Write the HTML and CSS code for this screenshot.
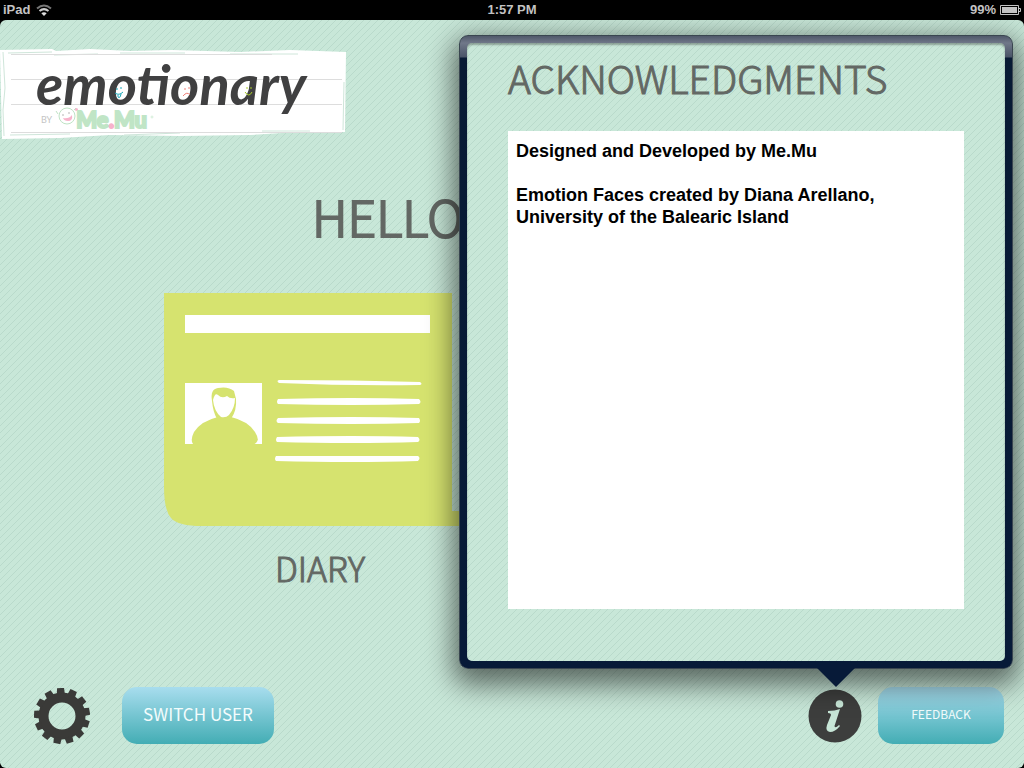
FILE: index.html
```html
<!DOCTYPE html>
<html lang="en">
<head>
<meta charset="utf-8">
<title>Emotionary</title>
<link rel="stylesheet" href="styles.css">
</head>
<body>
<header class="status">
  <div class="status-left"><span>iPad</span>
    <svg class="wifi" viewBox="0 0 16 12" aria-hidden="true"><path d="M1 4.500Q8-1.500 15 4.500" stroke="#777"/><path d="M3.500 7Q8 3.200 12.500 7" stroke="#ccc"/><path d="M8 12L5.300 9.200Q8 7.200 10.700 9.200Z" fill="#ddd"/></svg>
  </div>
  <time>1:57 PM</time>
  <div class="status-right"><span>99%</span>
    <svg class="battery" viewBox="0 0 21 10" aria-hidden="true"><path d="M.5.5H18.500V9.500H.5Z" fill="none" stroke="#c4c4c4"/><path d="M2 2H17V8H2Z" fill="#c4c4c4"/><path d="M19 3.500H20.500V6.500H19" fill="none" stroke="#c4c4c4"/></svg>
  </div>
</header>
<main class="screen">
  <div class="brand">
    <svg class="brand-art" viewBox="0 0 346 92" aria-hidden="true">
      <path class="paper" d="M0 2L52 1 56 3 90 1 130 3 172 2 240 4 290 2 346 4 345 84 282 85 250 87 180 88 110 87 60 90 2 91Z"/>
      <path class="scratch" d="M4 88L3 62 5 40 3 4M8 5L52 4M54 7L98 6M120 5L185 5M230 6L298 6M344 34L343 82M10 87L70 86M124 87L180 85M262 83L310 83"/>
      <path class="rule" d="M11 6.500H272M11 31.500H342M11 56.500H342M11 84.500H342"/>
      <g class="mascot"><circle cx="67" cy="68" r="8"/><path d="M56 63L58 66M74 62L76 60"/><path class="pink" d="M63 70Q69 71 72 67Q73 73 68 73Q64 73 63 70Z"/><circle class="pink" cx="76.500" cy="61.500" r="1.500"/><circle class="eye" cx="63" cy="67" r=".7"/><circle class="eye" cx="69" cy="65" r=".7"/></g>
      <circle cx="152" cy="69" r="1" fill="none" stroke="#c0e5c6" stroke-width=".6"/>
    </svg>
    <div class="brand-text"><span class="wordmark">emotionary</span><span class="byline"><span class="by">BY</span><span class="maker">Me<b>.</b>Mu</span></span></div>
    <svg class="brand-art" viewBox="0 0 346 92" aria-hidden="true">
      <g class="face blue"><path d="M115 45Q119 48 123 44M118 47V49Q120 51 121 46"/><path d="M117 40V42M121 39V41"/></g>
      <g class="face red"><path d="M183 48Q187 43 190 47"/><path d="M185 40V42M189 39V41"/></g>
      <g class="face lime"><path d="M245 44Q249 50 252 44"/><path d="M247 39V41M251 39V41"/></g>
    </svg>
  </div>
  <h1 class="hello">HELLO</h1>
  <a class="diary" href="#diary">
    <svg class="diary-art" viewBox="0 0 312 234" aria-hidden="true">
      <path fill="#d6e36f" d="M0 0H288V218H312V233H38Q14 233 7 225 0 217 0 194Z"/>
      <path fill="#fff" d="M21 22H266V40H21ZM21 90H98V151H21Z"/>
      <path fill="#d6e36f" d="M54 124Q37 128 30 139 26 147 29 151L34 152H89L92 150Q96 147 91 139 84 128 67 124Z"/>
      <path fill="#d6e36f" d="M48 108Q46 96 54 95 64 93 70 98L72 106Q73 117 67 126L62 131H58L53 126Q49 119 48 108Z"/>
      <path fill="#fff" d="M49 107Q51 99 54 102 58 106 63 103 66 106 71 105 71 115 65 122 62 125 57 124 50 118 49 107Z"/>
      <path fill="#fff" d="M115 87Q190 87 256 89Q259 91 256 92Q185 93 115 90Q112 88 115 87ZM114 106Q190 104 255 106Q258 109 255 111Q190 113 114 111Q112 109 114 106ZM114 125Q190 123 255 125Q257 128 255 130Q190 132 114 130Q111 128 114 125ZM113 144Q190 142 254 144Q257 147 254 149Q190 151 113 149Q111 147 113 144ZM112 163H254Q257 165 254 168Q190 170 112 168Q110 166 112 163Z"/>
    </svg>
    <span class="diary-label">DIARY</span>
  </a>
  <footer class="toolbar">
    <button class="icon-button" type="button" aria-label="Settings">
      <svg class="gear" viewBox="-28 -28 56 56" aria-hidden="true"><defs><path id="cog" d="M-4-22L-3.500-28H3.500L4-22Z"/></defs><circle r="18.500" fill="none" stroke="#3a3a38" stroke-width="10"/><g fill="#3a3a38"><use href="#cog" transform="rotate(-3)"/><use href="#cog" transform="rotate(24.700)"/><use href="#cog" transform="rotate(52.400)"/><use href="#cog" transform="rotate(80)"/><use href="#cog" transform="rotate(107.700)"/><use href="#cog" transform="rotate(135.400)"/><use href="#cog" transform="rotate(163)"/><use href="#cog" transform="rotate(190.700)"/><use href="#cog" transform="rotate(218.400)"/><use href="#cog" transform="rotate(246)"/><use href="#cog" transform="rotate(273.700)"/><use href="#cog" transform="rotate(301.400)"/><use href="#cog" transform="rotate(329)"/></g></svg>
    </button>
    <button class="pill switch" type="button">SWITCH USER</button>
    <button class="icon-button info-button" type="button" aria-label="Information">
      <svg class="info" viewBox="0 0 54 54" aria-hidden="true"><circle cx="27" cy="27" r="26.500" fill="#3d3e3d"/><circle cx="31.500" cy="15" r="3.800" fill="#c7e6d7"/><path fill="#c7e6d7" d="M20 22Q27 22 32 20L26.500 37Q27 40 31 36L32 37Q27 43 22 43 17 42 19 36L23 26Q23 24 20 24Z"/></svg>
    </button>
    <button class="pill feedback" type="button">FEEDBACK</button>
  </footer>
</main>
<section class="popover" role="dialog" aria-labelledby="ack-title">
  <div class="popover-body">
    <h2 class="ack-title" id="ack-title">ACKNOWLEDGMENTS</h2>
    <div class="ack-text"><p>Designed and Developed by Me.Mu</p><p>Emotion Faces created by Diana Arellano, University of the Balearic Island</p></div>
  </div>
  <svg class="pointer" viewBox="0 0 38 20" aria-hidden="true"><path d="M0 0H38L19 19Z" fill="#071a38"/></svg>
</section>
</body>
</html>
```
FILE: styles.css
```css
* { box-sizing: border-box; }

:root {
  --hand: "Noto Sans CJK JP", "Lato", sans-serif;
  --stripes: linear-gradient(135deg, #c8e7d8 45%, #b9dacb 50%, #c8e7d8 55%) 0 0 / 7px 7px;
}

body {
  display: flex;
  flex-direction: column;
  min-height: 100vh;
  margin: 0;
  position: relative;
  overflow: hidden;
  background: #000;
  font-family: var(--hand);
}

.status {
  display: grid;
  grid-template-columns: 1fr auto 1fr;
  align-items: center;
  height: 20px;
  padding: 0 3px;
  color: #c4c4c4;
  font: bold 13px/20px "Liberation Sans", Arial, sans-serif;
}
.status-left, .status-right { display: flex; align-items: center; gap: 6px; }
.status-right { justify-content: flex-end; gap: 4px; }
.wifi { width: 16px; height: 12px; fill: none; stroke-width: 2; }
.battery { width: 21px; height: 10px; }

.screen {
  display: flex;
  flex: 1;
  flex-direction: column;
  padding-top: 28px;
  border-radius: 6px;
  background: var(--stripes);
}

.brand { display: grid; width: 346px; }
.brand > * { grid-area: 1 / 1; }
.brand-art { width: 346px; height: 92px; }
.paper { fill: #fff; }
.scratch { fill: none; stroke: #cfe6da; stroke-width: 1; }
.rule { stroke: #ddd; }
.mascot { fill: none; stroke: #bfe3c5; }
.mascot .pink { fill: #f7b3cb; stroke: none; }
.mascot .eye { fill: #999; stroke: none; }
.face { fill: none; stroke-width: 1; }
.blue { stroke: #18a6b8; }
.red { stroke: #f08078; }
.lime { stroke: #a8cc28; }
.brand-text { display: flex; flex-direction: column; padding-left: 36px; }
.wordmark {
  height: 60px;
  color: #404041;
  font: italic 700 56px/72px "Lato", sans-serif;
}
.byline { display: flex; align-items: center; gap: 24px; padding-left: 5px; }
.by { color: #c4c4c4; font: 9px/24px "Lato", sans-serif; }
.maker {
  color: #c0e5c6;
  font: 900 22px/24px "Lato", sans-serif;
  -webkit-text-stroke: 2px currentColor;
}
.maker b { color: #f7b3cb; }

.hello {
  margin: 43px 0 0 312px;
  color: #636864;
  font-size: 50px;
  font-weight: 300;
  line-height: 64px;
  -webkit-text-stroke: 2px currentColor;
}

.diary {
  display: flex;
  flex-direction: column;
  align-items: center;
  width: 312px;
  margin: 46px 0 0 164px;
  color: #636864;
  text-decoration: none;
}
.diary-art { width: 312px; height: 234px; }
.diary-label {
  margin-top: 15px;
  font-size: 34px;
  font-weight: 300;
  line-height: 52px;
  -webkit-text-stroke: 1px currentColor;
}

.toolbar {
  display: flex;
  align-items: center;
  margin-top: auto;
  padding: 0 20px 24px 34px;
}
.icon-button { display: flex; padding: 0; border: 0; background: none; }
.gear { width: 56px; height: 56px; }
.info { width: 54px; height: 54px; }
.info-button { margin: 0 16px 0 auto; }
.pill {
  height: 57px;
  padding: 0 0 4px;
  border: 0;
  border-radius: 15px;
  background: linear-gradient(#a8ddee, #43adb4);
  color: #f3fcfc;
  font-family: var(--hand);
  font-weight: 400;
}
.switch { width: 152px; margin-left: 32px; font-size: 17px; }
.feedback { width: 126px; font-size: 12px; }

.popover {
  position: absolute;
  top: 35px;
  right: 11px;
  width: 554px;
  padding: 7px;
  border: 1px solid #3a4650;
  border-radius: 9px;
  background: linear-gradient(#50586a, #707889 7px, #4a5468 21px, #081a34 22px, #071a38);
  box-shadow: 0 10px 28px 6px rgba(0, 0, 0, .55);
}
.popover-body {
  padding: 6px 41px 52px;
  border-radius: 5px;
  background: var(--stripes);
  box-shadow: inset 0 2px 2px rgba(0, 0, 0, .3);
}
.ack-title {
  margin: 0 0 26px;
  color: #636864;
  font-size: 39px;
  font-weight: 300;
  line-height: 56px;
  -webkit-text-stroke: 1px currentColor;
}
.ack-text {
  min-height: 478px;
  padding: 9px 8px;
  background: #fff;
  color: #000;
  font: bold 18px/22px "Liberation Sans", Arial, sans-serif;
}
.ack-text p { margin: 0 0 22px; }
.pointer {
  position: absolute;
  top: 100%;
  right: 157px;
  width: 38px;
  height: 20px;
}
```
